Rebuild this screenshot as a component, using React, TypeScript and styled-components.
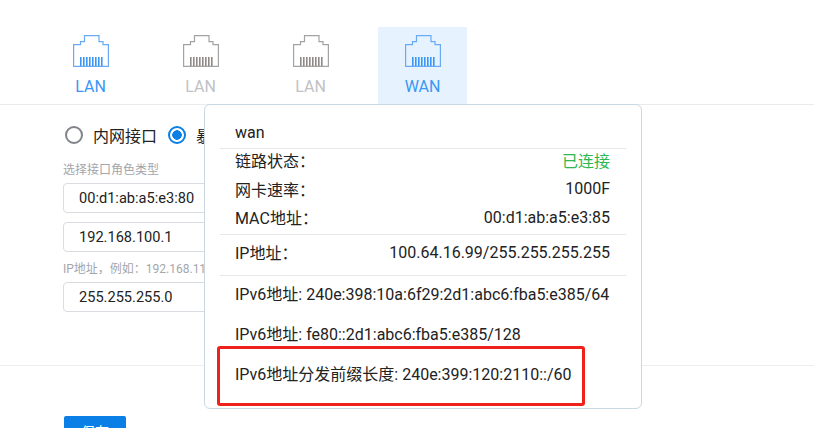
import React from "react";
import styled, { createGlobalStyle } from "styled-components";

const GlobalStyle = createGlobalStyle`
    html, body {
        margin: 0;
        padding: 0;
        background: #fff;
        height: 428px;
        overflow: hidden;
    }
    body {
        font-family: Roboto, "Noto Sans CJK SC", sans-serif;
        font-size: 16px;
        color: #222;
    }
`;

const Page = styled.div`
    position: relative;
    width: 814px;
    height: 428px;
    overflow: hidden;
`;

const Tabs = styled.div`
    display: flex;
    gap: 21px;
    height: 77px;
    margin-top: 27px;
    padding-left: 46px;
    border-bottom: 1px solid #e8eaec;
`;

const Tab = styled.div<{ $current?: boolean; $on?: boolean }>`
    width: 89px;
    height: 77px;
    display: flex;
    flex-direction: column;
    align-items: center;
    padding-top: 8px;
    box-sizing: border-box;
    margin-left: ${(p) => (p.$current ? "2px" : "0")};
    background: ${(p) => (p.$current ? "#e6f3fe" : "transparent")};
    color: ${(p) => (p.$on ? "#3a97f5" : "#c0c2c6")};
    font-size: 16px;
`;

const TabLabel = styled.span`
    margin-top: 11px;
    line-height: 18px;
`;

const Form = styled.div`
    display: flex;
    flex-direction: column;
    height: 261px;
    padding: 19px 0 0 63px;
    box-sizing: border-box;
    border-bottom: 1px solid #eceef0;
`;

const RadioRow = styled.div`
    display: flex;
    align-items: center;
    height: 21px;
    margin-bottom: 17px;
`;

const Radio = styled.span<{ $checked?: boolean }>`
    width: 18px;
    height: 18px;
    box-sizing: border-box;
    border-radius: 50%;
    border: 2px solid ${(p) => (p.$checked ? "#0a7fe6" : "#80838a")};
    background: ${(p) => (p.$checked ? "radial-gradient(circle, #0a7fe6 0 4.5px, #fff 5px)" : "#fff")};
    flex: none;
    margin-right: 10px;
    margin-left: 2px;
`;

const RadioText = styled.span`
    font-size: 16px;
    line-height: 21px;
    margin-right: 9px;
    padding-top: 3px;
    color: #222;
`;

const Hint = styled.div`
    font-size: 12px;
    line-height: 16px;
    color: #a3a6ab;
    white-space: nowrap;
    margin-bottom: 5px;
`;

const Field = styled.div<{ $bottom?: number }>`
    width: 300px;
    height: 30px;
    box-sizing: border-box;
    border: 1px solid #d9dce0;
    border-radius: 4px;
    padding-left: 15px;
    line-height: 28px;
    font-size: 14.6px;
    color: #222;
    margin-bottom: ${(p) => p.$bottom ?? 0}px;
`;

const Footer = styled.div`
    padding: 50px 0 0 64px;
`;

const SaveButton = styled.div`
    width: 62px;
    height: 34px;
    border-radius: 2px;
    background: #0a7fe6;
    color: #fff;
    font-size: 14px;
    text-align: center;
    line-height: 32px;
    box-sizing: border-box;
`;

const Popover = styled.div`
    position: absolute;
    left: 204px;
    top: 104px;
    width: 438px;
    height: 305px;
    box-sizing: border-box;
    padding: 14px 15px 0;
    background: #fff;
    border: 1px solid #c9d8e2;
    border-radius: 6px;
    font-size: 16px;
`;

const PopTitle = styled.div`
    height: 29px;
    line-height: 28px;
    padding-left: 15px;
    border-bottom: 1px solid #e6e8ea;
`;

const Section = styled.div<{ $last?: boolean }>`
    display: flex;
    flex-direction: column;
    border-bottom: ${(p) => (p.$last ? "none" : "1px solid #e6e8ea")};
`;

const Row = styled.div<{ $height: number }>`
    display: flex;
    justify-content: space-between;
    align-items: center;
    box-sizing: border-box;
    height: ${(p) => p.$height}px;
    padding: 0 16px 6px 15px;
    white-space: nowrap;
`;

const Connected = styled.span`
    color: #2eb84f;
`;

const Highlight = styled.div`
    position: absolute;
    left: 12px;
    top: 241px;
    width: 368px;
    height: 60px;
    box-sizing: border-box;
    border: 3px solid #f0201a;
    border-radius: 3px;
`;

const PortIcon = ({ color, pins }: { color: string; pins: string }) => (
    <svg width="36" height="32" viewBox="0 0 36 32" fill="none">
        <path d="M.6 31.4V9.6H7.5V6.6H11.5V.6H26V6.6H30V9.6H35.4V31.4Z" stroke={color} strokeWidth="1.2" />
        {[7, 10, 13, 16, 19, 22, 25, 28].map((x) => (
            <rect key={x} x={x} y="22" width="1.6" height="9" fill={pins} />
        ))}
    </svg>
);

export default function App() {
    const tabs = [
        { label: "LAN", on: true },
        { label: "LAN", on: false },
        { label: "LAN", on: false },
        { label: "WAN", on: true, current: true },
    ];
    return (
        <Page>
            <GlobalStyle />
            <Tabs>
                {tabs.map((t, i) => (
                    <Tab key={i} $on={t.on} $current={t.current}>
                        <PortIcon color={t.on ? "#6aaaf2" : "#a3a3a3"} pins={t.on ? "#3a97f5" : "#8f8a86"} />
                        <TabLabel>{t.label}</TabLabel>
                    </Tab>
                ))}
            </Tabs>
            <Form>
                <RadioRow>
                    <Radio />
                    <RadioText>内网接口</RadioText>
                    <Radio $checked />
                    <RadioText>暴</RadioText>
                </RadioRow>
                <Hint>选择接口角色类型</Hint>
                <Field $bottom={9}>00:d1:ab:a5:e3:80</Field>
                <Field $bottom={9}>192.168.100.1</Field>
                <Hint>IP地址，例如：192.168.11.1</Hint>
                <Field>255.255.255.0</Field>
            </Form>
            <Footer>
                <SaveButton>保存</SaveButton>
            </Footer>
            <Popover>
                <PopTitle>wan</PopTitle>
                <Section>
                    <Row $height={28}>
                        <span>链路状态：</span>
                        <Connected>已连接</Connected>
                    </Row>
                    <Row $height={29}>
                        <span>网卡速率：</span>
                        <span>1000F</span>
                    </Row>
                    <Row $height={28}>
                        <span>MAC地址：</span>
                        <span>00:d1:ab:a5:e3:85</span>
                    </Row>
                </Section>
                <Section>
                    <Row $height={40}>
                        <span>IP地址：</span>
                        <span>100.64.16.99/255.255.255.255</span>
                    </Row>
                </Section>
                <Section $last>
                    <Row $height={40}>
                        <span>IPv6地址: 240e:398:10a:6f29:2d1:abc6:fba5:e385/64</span>
                    </Row>
                    <Row $height={40}>
                        <span>IPv6地址: fe80::2d1:abc6:fba5:e385/128</span>
                    </Row>
                    <Row $height={40}>
                        <span>IPv6地址分发前缀长度: 240e:399:120:2110::/60</span>
                    </Row>
                </Section>
                <Highlight />
            </Popover>
        </Page>
    );
}
